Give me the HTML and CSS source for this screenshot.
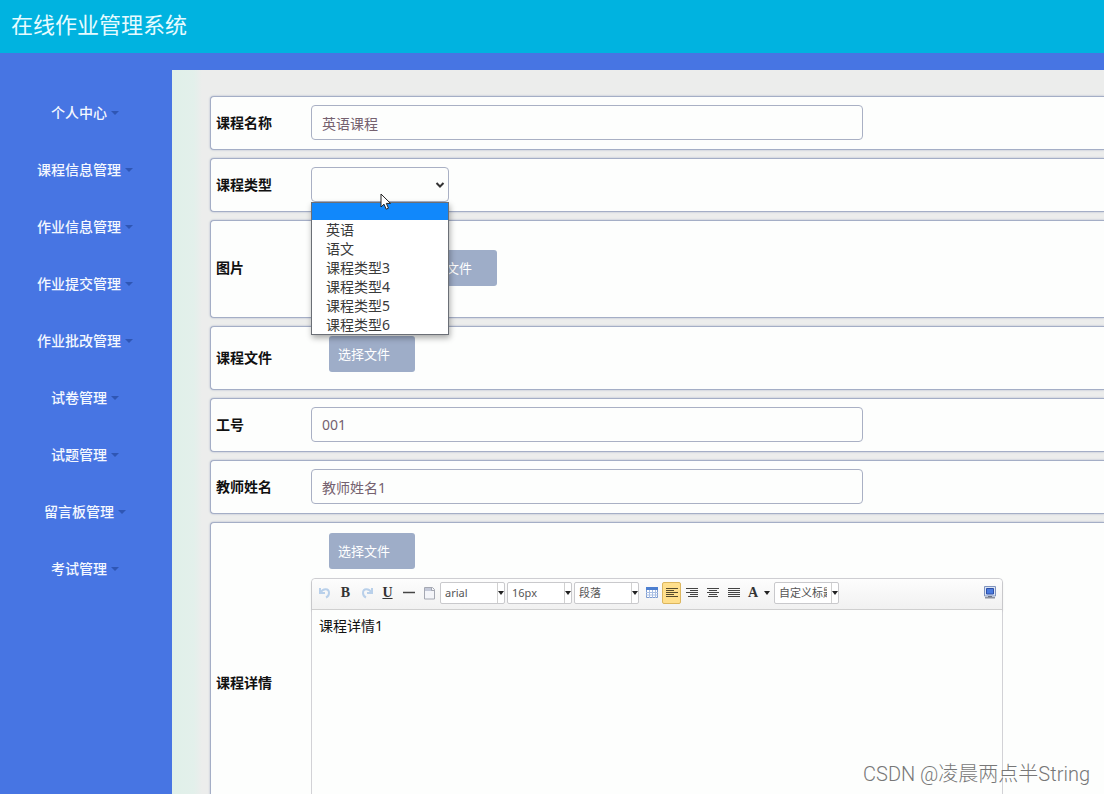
FILE: index.html
```html
<!DOCTYPE html>
<html lang="zh-CN">
<head>
<meta charset="utf-8">
<meta name="viewport" content="width=device-width, initial-scale=1">
<title>在线作业管理系统</title>
<link rel="stylesheet" href="styles.css">
</head>
<body>
<div class="app">
  <header class="topbar"><h1 class="brand">在线作业管理系统</h1></header>
  <div class="shell">
    <nav class="sidebar" aria-label="主菜单">
      <button class="menu-item" type="button">个人中心</button>
      <button class="menu-item" type="button">课程信息管理</button>
      <button class="menu-item" type="button">作业信息管理</button>
      <button class="menu-item" type="button">作业提交管理</button>
      <button class="menu-item" type="button">作业批改管理</button>
      <button class="menu-item" type="button">试卷管理</button>
      <button class="menu-item" type="button">试题管理</button>
      <button class="menu-item" type="button">留言板管理</button>
      <button class="menu-item" type="button">考试管理</button>
    </nav>
    <main class="content">
      <form class="form">
        <div class="row">
          <label class="row-label" for="name">课程名称</label>
          <input class="field" id="name" type="text" value="英语课程">
        </div>
        <div class="row">
          <label class="row-label" for="type">课程类型</label>
          <div class="picker">
            <select class="picker-select" id="type"><option></option></select>
            <svg class="picker-chevron" viewBox="0 0 10 8" aria-hidden="true"><path d="M1.5 2 5 5.5 8.5 2" fill="none" stroke="#333" stroke-width="2"/></svg>
            <ul class="options" role="listbox" aria-label="课程类型">
              <li class="option selected" role="option" aria-selected="true"></li>
              <li class="option" role="option">英语</li>
              <li class="option" role="option">语文</li>
              <li class="option" role="option">课程类型3</li>
              <li class="option" role="option">课程类型4</li>
              <li class="option" role="option">课程类型5</li>
              <li class="option" role="option">课程类型6</li>
            </ul>
            <svg class="cursor" viewBox="0 0 12 18" aria-hidden="true"><path d="M1 1v13l3-2.800 2.200 5 2.300-1-2.200-4.800H10.500z" fill="#fff" stroke="#222" stroke-width="1"/></svg>
          </div>
        </div>
        <div class="row row-picture">
          <span class="row-label">图片</span>
          <button class="upload upload-picture" type="button">选择文件</button>
        </div>
        <div class="row row-file">
          <span class="row-label">课程文件</span>
          <button class="upload" type="button">选择文件</button>
        </div>
        <div class="row">
          <label class="row-label" for="number">工号</label>
          <input class="field" id="number" type="text" value="001">
        </div>
        <div class="row">
          <label class="row-label" for="teacher">教师姓名</label>
          <input class="field" id="teacher" type="text" value="教师姓名1">
        </div>
        <div class="row row-detail">
          <label class="row-label" for="detail">课程详情</label>
          <div class="detail">
            <button class="upload" type="button">选择文件</button>
            <div class="editor">
              <div class="toolbar">
                <button class="tool" type="button" aria-label="撤销"><svg viewBox="0 0 16 16"><path d="M3 3v5h5M3.500 7.500C6 3 12 3 12 8c0 2-1 3.500-3 4.500" fill="none" stroke="#b9d0ea" stroke-width="2"/></svg></button>
                <button class="tool glyph" type="button">B</button>
                <button class="tool" type="button" aria-label="重做"><svg viewBox="0 0 16 16"><path d="M13 3v5H8M12.500 7.500C10 3 4 3 4 8c0 2 1 3.500 3 4.500" fill="none" stroke="#b9d0ea" stroke-width="2"/></svg></button>
                <button class="tool glyph underline" type="button">U</button>
                <button class="tool" type="button" aria-label="分隔线"><svg viewBox="0 0 16 16"><path d="M2 7.500h12" stroke="#444" stroke-width="1.500"/></svg></button>
                <button class="tool" type="button" aria-label="清空文档"><svg viewBox="0 0 16 16"><path d="M2.500 2.500h8l2 2v9.500h-10z" fill="#f4f5f9" stroke="#a5a8b2"/><path d="M3 3h7v3H3z" fill="#c3c8d8"/><path d="M9.500 2.500v3h3" fill="none" stroke="#a5a8b2"/></svg></button>
                <span class="combo"><select aria-label="字体"><option>arial</option></select></span>
                <span class="combo"><select aria-label="字号"><option>16px</option></select></span>
                <span class="combo"><select aria-label="段落格式"><option>段落</option></select></span>
                <button class="tool" type="button" aria-label="表格"><svg viewBox="0 0 16 16"><path d="M2.500 2.500h11v10h-11z" fill="#fff" stroke="#7d9bd0"/><path d="M2 2h12v3H2z" fill="#4d7fd0"/><path d="M2 7.500h12M2 10h12M5.500 5v8M8.500 5v8M11.500 5v8" stroke="#a9bfe4" stroke-width="1"/></svg></button>
                <button class="tool active" type="button" aria-label="左对齐"><svg viewBox="0 0 16 16"><path d="M2 3.500h12M2 5.500h8M2 7.500h12M2 9.500h8M2 11.500h12" stroke="#554a2c"/></svg></button>
                <button class="tool" type="button" aria-label="右对齐"><svg viewBox="0 0 16 16"><path d="M2 3.500h12M6 5.500h8M2 7.500h12M6 9.500h8M4 11.500h10" stroke="#444"/></svg></button>
                <button class="tool" type="button" aria-label="居中"><svg viewBox="0 0 16 16"><path d="M2 3.500h12M4 5.500h8M2 7.500h12M4 9.500h8M3 11.500h10" stroke="#444"/></svg></button>
                <button class="tool" type="button" aria-label="两端对齐"><svg viewBox="0 0 16 16"><path d="M2 3.500h12M2 5.500h12M2 7.500h12M2 9.500h12M2 11.500h12" stroke="#444"/></svg></button>
                <button class="tool glyph color" type="button">A</button>
                <span class="combo"><select aria-label="自定义标题"><option>自定义标题</option></select></span>
                <button class="tool fullscreen" type="button" aria-label="全屏"><svg viewBox="0 0 16 16"><path d="M2.500 1.500h11v9.500h-11z" fill="#dde5f4" stroke="#7f93bd"/><path d="M4.500 3.500h7v5.500h-7z" fill="#4a7ade" stroke="#2c4fa8"/><path d="M6 11h4v1.500H6z" fill="#6d7484"/><path d="M3 12h10v1.500H3z" fill="#8b919f"/></svg></button>
              </div>
              <textarea class="editor-text" id="detail">课程详情1</textarea>
            </div>
          </div>
        </div>
      </form>
    </main>
  </div>
  <div class="watermark">CSDN @凌晨两点半String</div>
</div>
</body>
</html>
```
FILE: styles.css
```css
* { box-sizing: border-box; }

body {
  margin: 0;
  font: 14px/20px "Noto Sans", "Noto Sans CJK SC", sans-serif;
  color: #111;
}

button, input, select, textarea { font: inherit; color: inherit; }

.app {
  position: relative;
  display: flex;
  flex-direction: column;
  height: 100vh;
  overflow: hidden;
  background: #4775e3;
}

.topbar {
  display: flex;
  align-items: center;
  flex: none;
  height: 53px;
  padding: 0 11px 5px;
  background: #00b3e0;
}

.brand {
  margin: 0;
  font-size: 22px;
  font-weight: 400;
  line-height: 32px;
  color: #e6fbff;
}

.shell { display: flex; flex: 1; min-height: 0; }

.sidebar {
  display: flex;
  flex-direction: column;
  flex: none;
  width: 172px;
  padding-top: 31px;
}

.menu-item {
  display: flex;
  align-items: center;
  justify-content: center;
  gap: 4px;
  flex: none;
  height: 57px;
  padding: 0 2px 0 0;
  border: 0;
  background: none;
  color: #f4f8ff;
  font-weight: 500;
}

.menu-item::after {
  content: "";
  border: 4px solid transparent;
  border-top-color: #2f56b4;
  border-bottom: 0;
}

.content {
  flex: 1;
  min-width: 0;
  margin-top: 17px;
  padding: 26px 0 0 38px;
  background: linear-gradient(90deg, #e0f0e9 0, #e3f0eb 22px, #ecedec 30px);
  overflow: hidden;
}

.form { display: flex; flex-direction: column; gap: 8px; }

.row {
  display: flex;
  align-items: center;
  flex: none;
  min-height: 54px;
  padding: 0 4px 1px;
  border: 1px solid #a4aec6;
  border-right: 0;
  border-radius: 4px 0 0 4px;
  box-shadow: 0 0 2px #a4aec6;
  background: #fdfefd;
}

.row-picture { min-height: 98px; padding-bottom: 2px; }
.row-file { min-height: 64px; }
.row-file .upload { margin-bottom: 8px; }
.row-detail { min-height: 320px; align-items: stretch; padding-top: 10px; padding-bottom: 9px; }
.row-detail .row-label { align-self: center; }

.row-label {
  flex: none;
  width: 96px;
  padding-left: 1px;
  font-weight: 700;
}

.field, .picker-select {
  height: 35px;
  border: 1px solid #a9b0c4;
  border-radius: 4px;
  background: #fdfefd;
}

.field {
  flex: 0 1 552px;
  min-width: 0;
  padding: 0 10px;
  color: #75616f;
}

.picker { position: relative; width: 138px; }

.picker-select {
  display: block;
  width: 100%;
  appearance: none;
}

.picker-chevron {
  position: absolute;
  top: 14px;
  right: 4px;
  width: 10px;
  height: 8px;
  pointer-events: none;
}

.options {
  position: absolute;
  z-index: 2;
  top: 100%;
  left: 0;
  width: 100%;
  margin: 0;
  padding: 0;
  border: 1px solid #6b6f76;
  background: #fff;
  box-shadow: 1px 3px 6px #0005;
  list-style: none;
  color: #3a3a3a;
}

.option { height: 19px; padding-left: 14px; line-height: 19px; }
.option.selected { height: 17px; background: #1188fb; }

.cursor {
  position: absolute;
  z-index: 3;
  top: 26px;
  left: 69px;
  width: 12px;
  height: 18px;
}

.upload {
  flex: none;
  width: 86px;
  height: 36px;
  margin-left: 18px;
  padding: 0 9px;
  border: 0;
  border-radius: 3px;
  background: #9eadc8;
  color: #fff;
  font-size: 13px;
  text-align: left;
}

.upload-picture { margin-left: 100px; }

.detail { display: flex; flex-direction: column; flex: 0 1 692px; min-width: 0; gap: 9px; }

.editor {
  display: flex;
  flex-direction: column;
  flex: 1;
  border: 1px solid #d2d2d6;
  border-radius: 4px;
}

.toolbar {
  display: flex;
  align-items: center;
  height: 31px;
  padding: 0 2px 3px;
  border-bottom: 1px solid #cfcfcf;
  border-radius: 4px 4px 0 0;
  background: linear-gradient(#fdfdfd, #f1f1f1);
  box-shadow: 0 1px 3px #0002;
}

.tool {
  display: flex;
  align-items: center;
  justify-content: center;
  flex: none;
  width: 21px;
  height: 22px;
  padding: 0;
  border: 1px solid transparent;
  border-radius: 2px;
  background: none;
}

.tool svg { width: 16px; height: 16px; flex: none; }
.tool.active { width: 19px; border-color: #dcb65e; background: #ffdf8c; }
.tool.fullscreen { margin-left: auto; }

.glyph { font: 700 14px/20px "Liberation Serif", serif; color: #333; }
.underline { text-decoration: underline; }

.color { width: 30px; gap: 6px; }
.color::after, .combo::after {
  content: "";
  border: 3px solid transparent;
  border-top: 4px solid #222;
  border-bottom: 0;
}

.combo {
  position: relative;
  flex: none;
  width: 65px;
  height: 22px;
  margin-right: 2px;
  border: 1px solid #c9c9cc;
  border-radius: 2px;
  background: #fff;
}

.combo select {
  display: block;
  width: 57px;
  height: 20px;
  padding: 0 4px;
  border: 0;
  border-right: 1px solid #d0d0d0;
  background: none;
  color: #555;
  font-size: 11px;
  line-height: 20px;
  appearance: none;
}

.combo::after { position: absolute; top: 8px; right: 0; }

.editor-text {
  flex: 1;
  padding: 6px 7px;
  border: 0;
  background: #fdfefd;
  resize: none;
}

.watermark {
  position: absolute;
  right: 14px;
  bottom: 6px;
  font: 300 20px/28px Roboto, "Noto Sans CJK SC", sans-serif;
  color: #777;
}
```
